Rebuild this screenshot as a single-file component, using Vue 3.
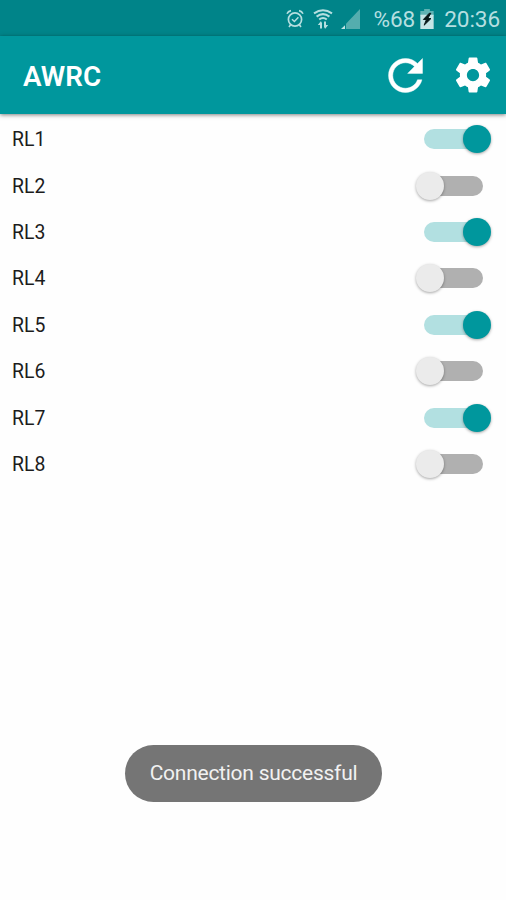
<script setup>
import { ref } from 'vue'

const relays = ref(
  Array.from({ length: 8 }, (_, i) => ({ name: `RL${i + 1}`, on: i % 2 === 0 }))
)
</script>

<template>
  <div class="screen">
    <div class="status">
      <svg class="alarm" viewBox="0 0 18 20" fill="none" stroke="currentColor">
        <circle cx="9" cy="10.5" r="6.6" stroke-width="1.7" />
        <path d="M6 10.2l2.4 2.3 4-4.2" stroke-width="1.5" />
        <path d="M1 4.8Q2 2.2 5 1.6M17 4.8Q16 2.2 13 1.6M4.6 15.8L3 18M13.4 15.8L15 18" stroke-width="1.6" />
      </svg>
      <svg class="wifi" viewBox="0 0 20 20" fill="none" stroke="currentColor">
        <path d="M1 4.4Q10-1.8 19 4.4M3.6 7.6Q10 2.6 16.4 7.6M6.2 10.6Q10 7.4 13.8 10.6" stroke-width="2" />
        <path d="M8 19.4v-6M12 12.6v6" stroke-width="2" />
        <path d="M4.8 16l3.2-4 1 4zM15.2 16l-3.2 4-1-4z" fill="currentColor" stroke="none" />
      </svg>
      <svg class="signal" viewBox="0 0 19 20">
        <path d="M5 14.7L19 0v20H5z" fill="#54adae" />
        <path d="M0 20l4-3.8V20z" fill="#c3e4e5" />
      </svg>
      <span class="percent">%68</span>
      <svg class="battery" viewBox="0 0 14 21">
        <path d="M4 0h6v2h4v5H0V2h4z" fill="#5fb3b4" />
        <path d="M0 6h14v15H0z" fill="#c5e5e6" />
        <path d="M9.3 4.5L3.2 11h3.2l-2.4 6 7.2-7H7.8l3.2-5.5z" fill="#061718" stroke="#061718" stroke-width="1" />
      </svg>
      <span class="clock">20:36</span>
    </div>
    <header class="bar">
      <h1>AWRC</h1>
      <svg class="refresh" viewBox="0 0 24 24" fill="#fff" stroke="#fff" stroke-width=".2">
        <path d="M17.65 6.35C16.2 4.9 14.21 4 12 4c-4.42 0-7.99 3.58-7.99 8s3.57 8 7.99 8c3.73 0 6.84-2.55 7.73-6h-2.08c-.82 2.33-3.04 4-5.65 4-3.31 0-6-2.69-6-6s2.69-6 6-6c1.66 0 3.14.69 4.22 1.78L13 11h7V4l-2.35 2.35z" />
      </svg>
      <svg class="gear" viewBox="0 0 24 24" fill="#fff">
        <path d="M19.43 12.98c.04-.32.07-.64.07-.98s-.03-.66-.07-.98l2.11-1.65c.19-.15.24-.42.12-.64l-2-3.46c-.12-.22-.39-.3-.61-.22l-2.49 1c-.52-.4-1.08-.73-1.69-.98l-.38-2.65C14.46 2.18 14.25 2 14 2h-4c-.25 0-.46.18-.49.42l-.38 2.65c-.61.25-1.17.59-1.69.98l-2.49-1c-.23-.09-.49 0-.61.22l-2 3.46c-.13.22-.07.49.12.64l2.11 1.65c-.04.32-.07.65-.07.98s.03.66.07.98l-2.11 1.65c-.19.15-.24.42-.12.64l2 3.46c.12.22.39.3.61.22l2.49-1c.52.4 1.08.73 1.69.98l.38 2.65c.03.24.24.42.49.42h4c.25 0 .46-.18.49-.42l.38-2.65c.61-.25 1.17-.59 1.69-.98l2.49 1c.23.09.49 0 .61-.22l2-3.46c.12-.22.07-.49-.12-.64l-2.11-1.65zM12 15.5c-1.93 0-3.5-1.57-3.5-3.5s1.57-3.5 3.5-3.5 3.5 1.57 3.5 3.5-1.57 3.5-3.5 3.5z" />
      </svg>
    </header>
    <main class="list">
      <div v-for="relay in relays" :key="relay.name" class="row" @click="relay.on = !relay.on">
        <span class="label">{{ relay.name }}</span>
        <span class="switch" :class="{ on: relay.on }"><i class="thumb"></i></span>
      </div>
    </main>
    <div class="toast">Connection successful</div>
  </div>
</template>

<style>
body {
  background: #fefefe;
}
</style>

<style scoped>
.screen {
  position: relative;
  display: flex;
  flex-direction: column;
  height: 900px;
  overflow: hidden;
  background: #fefefe;
  font-family: Roboto, "Liberation Sans", sans-serif;
}
.status {
  display: flex;
  align-items: center;
  justify-content: flex-end;
  height: 36px;
  padding: 2px 6px 0 0;
  box-sizing: border-box;
  flex: none;
  background: #008489;
  color: #b5dfe0;
  font-size: 22.6px;
  letter-spacing: -0.1px;
  line-height: 34px;
}
.status svg {
  flex: none;
}
.percent,
.clock {
  padding-top: 1px;
}
.alarm {
  width: 18px;
  height: 20px;
  margin-right: 9px;
}
.wifi {
  width: 20px;
  height: 20px;
  margin-right: 8px;
}
.signal {
  width: 19px;
  height: 20px;
  margin-right: 14px;
}
.battery {
  width: 14px;
  height: 20px;
  margin: 0 10px 0 5px;
}
.bar {
  position: relative;
  display: flex;
  align-items: center;
  flex: none;
  height: 78px;
  padding: 0 12px 0 23px;
  box-sizing: border-box;
  background: #00979d;
  box-shadow: 0 1px 4px rgba(0, 0, 0, 0.5);
}
h1 {
  flex: 1;
  margin: 3px 0 0;
  color: #fff;
  font-size: 27.8px;
  font-weight: 600;
  line-height: 32px;
}
.refresh {
  width: 51px;
  height: 51px;
  margin-right: 21px;
}
.gear {
  width: 42px;
  height: 42px;
}
.list {
  padding: 2px 15px 0 12px;
}
.row {
  display: flex;
  align-items: center;
  justify-content: space-between;
  height: 46.4px;
}
.label {
  padding-top: 2px;
  color: #1c1c1c;
  font-size: 19.4px;
  line-height: 24px;
}
.switch {
  display: flex;
  align-items: center;
  width: 59px;
  height: 20px;
  margin-right: 8px;
  border-radius: 10px;
  background: #b0b0b0;
}
.thumb {
  flex: none;
  width: 28px;
  height: 28px;
  margin-left: -8px;
  border-radius: 50%;
  background: #ebebeb;
  box-shadow: 0 1px 3px rgba(0, 0, 0, 0.35);
}
.switch.on {
  background: #b2e0e1;
}
.on .thumb {
  margin-left: 38.5px;
  background: #00979d;
}
.toast {
  position: absolute;
  left: 125px;
  top: 745px;
  width: 257px;
  height: 57px;
  border-radius: 29px;
  background: #757575;
  color: #f1f1f1;
  font-size: 21px;
  letter-spacing: -0.25px;
  line-height: 57px;
  text-align: center;
  white-space: nowrap;
}
</style>
